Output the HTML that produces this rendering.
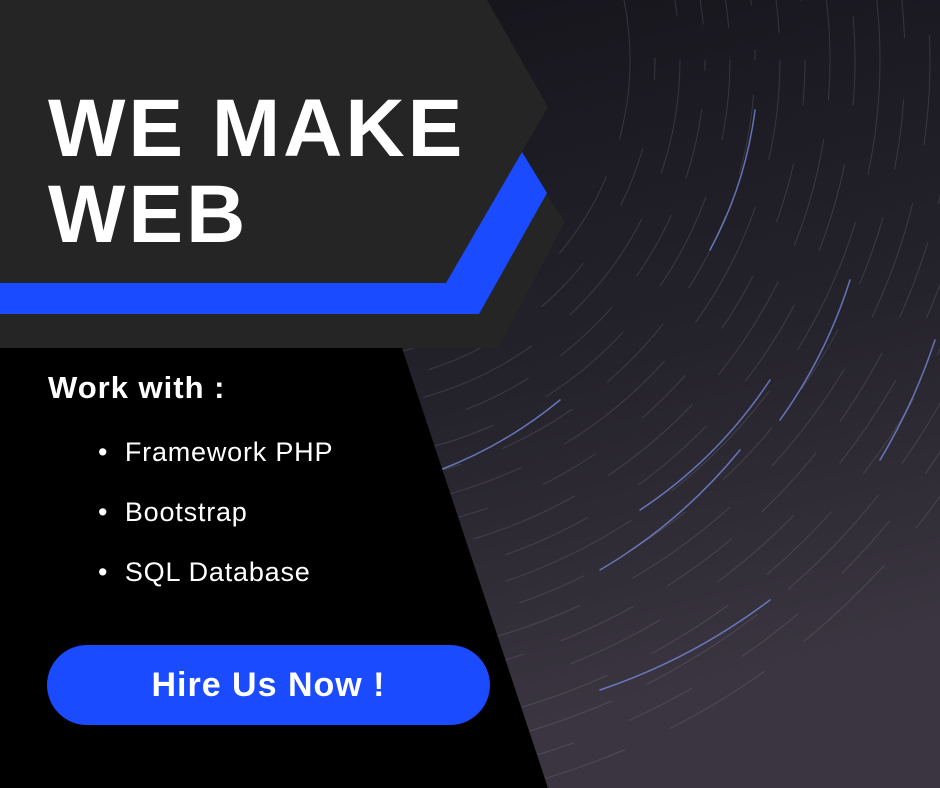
<!DOCTYPE html>
<html><head><meta charset="utf-8"><style>
html,body{margin:0;padding:0}
body{width:940px;height:788px;position:relative;overflow:hidden;background:#1c1b20;font-family:"Liberation Sans",sans-serif}
svg{position:absolute;left:0;top:0}
.t{position:absolute;color:#fff}
</style></head><body>
<svg width="940" height="788" viewBox="0 0 940 788">
<defs>
<linearGradient id="bg" x1="0" y1="0" x2="0.3" y2="1">
<stop offset="0" stop-color="#131218"/><stop offset="0.6" stop-color="#24222b"/><stop offset="1" stop-color="#3a3540"/>
</linearGradient>
</defs>
<rect width="940" height="788" fill="url(#bg)"/>
<g fill="none" stroke-linecap="round" stroke="#9a98a5" stroke-opacity="0.22" stroke-width="1">
<circle cx="330" cy="60" r="300" stroke-dasharray="90 40" stroke-dashoffset="10"/>
<circle cx="330" cy="60" r="325" stroke-dasharray="60 70" stroke-dashoffset="40"/>
<circle cx="330" cy="60" r="350" stroke-dasharray="120 50" stroke-dashoffset="5"/>
<circle cx="330" cy="60" r="375" stroke-dasharray="70 40" stroke-dashoffset="60"/>
<circle cx="330" cy="60" r="400" stroke-dasharray="100 60" stroke-dashoffset="20"/>
<circle cx="330" cy="60" r="425" stroke-dasharray="80 45" stroke-dashoffset="90"/>
<circle cx="330" cy="60" r="450" stroke-dasharray="130 50" stroke-dashoffset="30"/>
<circle cx="330" cy="60" r="475" stroke-dasharray="60 60" stroke-dashoffset="15"/>
<circle cx="330" cy="60" r="500" stroke-dasharray="110 40" stroke-dashoffset="70"/>
<circle cx="330" cy="60" r="525" stroke-dasharray="90 60" stroke-dashoffset="45"/>
<circle cx="330" cy="60" r="550" stroke-dasharray="140 50" stroke-dashoffset="25"/>
<circle cx="330" cy="60" r="575" stroke-dasharray="70 50" stroke-dashoffset="80"/>
<circle cx="330" cy="60" r="600" stroke-dasharray="120 60" stroke-dashoffset="35"/>
<circle cx="330" cy="60" r="625" stroke-dasharray="80 40" stroke-dashoffset="55"/>
<circle cx="330" cy="60" r="650" stroke-dasharray="100 70" stroke-dashoffset="5"/>
<circle cx="330" cy="60" r="675" stroke-dasharray="90 50" stroke-dashoffset="65"/>
<circle cx="330" cy="60" r="700" stroke-dasharray="130 40" stroke-dashoffset="40"/>
<circle cx="330" cy="60" r="725" stroke-dasharray="70 60" stroke-dashoffset="20"/>
<circle cx="330" cy="60" r="750" stroke-dasharray="110 50" stroke-dashoffset="85"/>
</g>
<g fill="none" stroke-linecap="round" stroke="#7b8fe8" stroke-opacity="0.75" stroke-width="1.5">
<path d="M640 510 A460 460 0 0 0 770 380"/>
<path d="M600 570 A520 520 0 0 0 740 450"/>
<path d="M440 470 A430 430 0 0 0 560 400"/>
<path d="M780 420 A500 500 0 0 0 850 280"/>
<path d="M710 250 A400 400 0 0 0 755 110"/>
<path d="M600 690 A600 600 0 0 0 770 600"/>
<path d="M880 460 A600 600 0 0 0 935 340"/>
</g>
<polygon points="0,348 402,348 548,788 0,788" fill="#000"/>
<polygon points="0,0 487,0 548,107 520,155 565,222 498,348 0,348" fill="#252525"/>
<polygon points="0,283 446,283 522,152 547,193 479,314 0,314" fill="#1a4bff"/>
<rect x="47" y="645" width="443" height="80" rx="40" fill="#1a4bff"/>
</svg>
<div class="t" style="left:48px;top:86px;font-size:82px;font-weight:bold;line-height:86px;letter-spacing:3px">WE MAKE<br>WEB</div>
<div class="t" style="left:48px;top:370px;font-size:31px;font-weight:bold;letter-spacing:1px">Work with :</div>
<div class="t" style="left:98px;top:422px;font-size:27px;line-height:60px;letter-spacing:0.8px">
<div>•&nbsp;&nbsp;Framework PHP</div><div>•&nbsp;&nbsp;Bootstrap</div><div>•&nbsp;&nbsp;SQL Database</div></div>
<div class="t" style="left:47px;top:645px;width:443px;height:80px;line-height:80px;text-align:center;font-size:34px;font-weight:bold;letter-spacing:1px">Hire Us Now !</div>
</body></html>
